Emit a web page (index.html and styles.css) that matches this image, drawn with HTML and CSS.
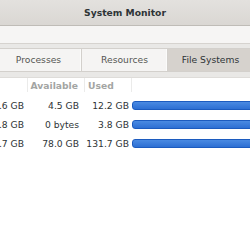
FILE: index.html
```html
<!DOCTYPE html>
<html lang="en">
<head>
    <meta charset="UTF-8">
    <title>System Monitor</title>
    <link rel="stylesheet" href="styles.css">
</head>
<body>
    <div class="window">
        <div class="titlebar">System Monitor</div>
        <div class="toolbar"></div>
        <div class="tab-strip">
            <div class="tabs">
                <div class="tab">Processes</div>
                <div class="tab">Resources</div>
                <div class="tab active">File Systems</div>
            </div>
        </div>

        <div class="table">
            <div class="row head">
                <div class="cell c-total"></div>
                <div class="cell c-avail">Available</div>
                <div class="cell c-used left">Used</div>
                <div class="cell c-bar"></div>
            </div>
            <div class="row">
                <div class="cell c-total">.6 GB</div>
                <div class="cell c-avail">4.5 GB</div>
                <div class="cell c-used">12.2 GB</div>
                <div class="cell c-bar"><div class="bar"></div></div>
            </div>
            <div class="row">
                <div class="cell c-total">.8 GB</div>
                <div class="cell c-avail">0 bytes</div>
                <div class="cell c-used">3.8 GB</div>
                <div class="cell c-bar"><div class="bar"></div></div>
            </div>
            <div class="row">
                <div class="cell c-total">.7 GB</div>
                <div class="cell c-avail">78.0 GB</div>
                <div class="cell c-used">131.7 GB</div>
                <div class="cell c-bar"><div class="bar"></div></div>
            </div>
        </div>
    </div>
</body>
</html>
```

FILE: styles.css
```css
body {
    margin: 0;
    font-family: 'DejaVu Sans', sans-serif;
    font-size: 9.2px;
    color: #2e3436;
    background-color: #fff;
}
.window {
    width: 250px;
    height: 250px;
    overflow: hidden;
    background-color: #fff;
}
.titlebar {
    height: 25px;
    line-height: 25px;
    text-align: center;
    font-weight: bold;
    color: #2e3436;
    background: linear-gradient(#e3e1de, #dad7d3);
    border-bottom: 1px solid #bfbcb7;
}
.toolbar {
    height: 17px;
    background-color: #f6f5f4;
    border-bottom: 1px solid #d6d3cf;
}
.tab-strip {
    background-color: #e9e8e6;
    padding: 4px 0 5px;
    border-bottom: 1px solid #dedcd9;
    overflow: hidden;
}
.tabs {
    display: flex;
    margin-left: -4px;
    border-top: 1px solid #d3d0cc;
    border-bottom: 1px solid #d3d0cc;
}
.tab {
    flex: 0 0 85px;
    height: 22px;
    line-height: 22px;
    text-align: center;
    color: #555753;
    background-color: #f5f4f3;
    border-right: 1px solid #d3d0cc;
    box-shadow: inset -1px 0 0 #fbfbfa;
}
.tab.active {
    color: #2e3436;
    background-color: #d6d2cd;
}
.table {
    background-color: #fff;
}
.row {
    display: flex;
    height: 19px;
    align-items: center;
}
.row.head {
    height: 14px;
    margin-bottom: 4px;
    font-weight: bold;
    color: #a3a5a3;
}
.cell {
    box-sizing: border-box;
    height: 100%;
    display: flex;
    align-items: center;
    justify-content: flex-end;
    white-space: nowrap;
}
.head .cell {
    border-right: 1px solid #ebebea;
}
.head .cell.c-bar {
    border-right: none;
}
.c-total {
    width: 28px;
    padding-right: 4px;
}
.c-avail {
    width: 57px;
    padding-right: 6px;
}
.c-used {
    width: 47px;
    padding-right: 3px;
}
.c-used.left {
    justify-content: flex-start;
    padding-left: 3px;
}
.c-bar {
    flex: 1;
    overflow: hidden;
}
.bar {
    flex: 0 0 130px;
    height: 7px;
    border: 1px solid #1c5bbf;
    border-radius: 3px;
    background: linear-gradient(#4a8ae2, #2d6fd3);
}
.c-bar {
    justify-content: flex-start;
}
```
